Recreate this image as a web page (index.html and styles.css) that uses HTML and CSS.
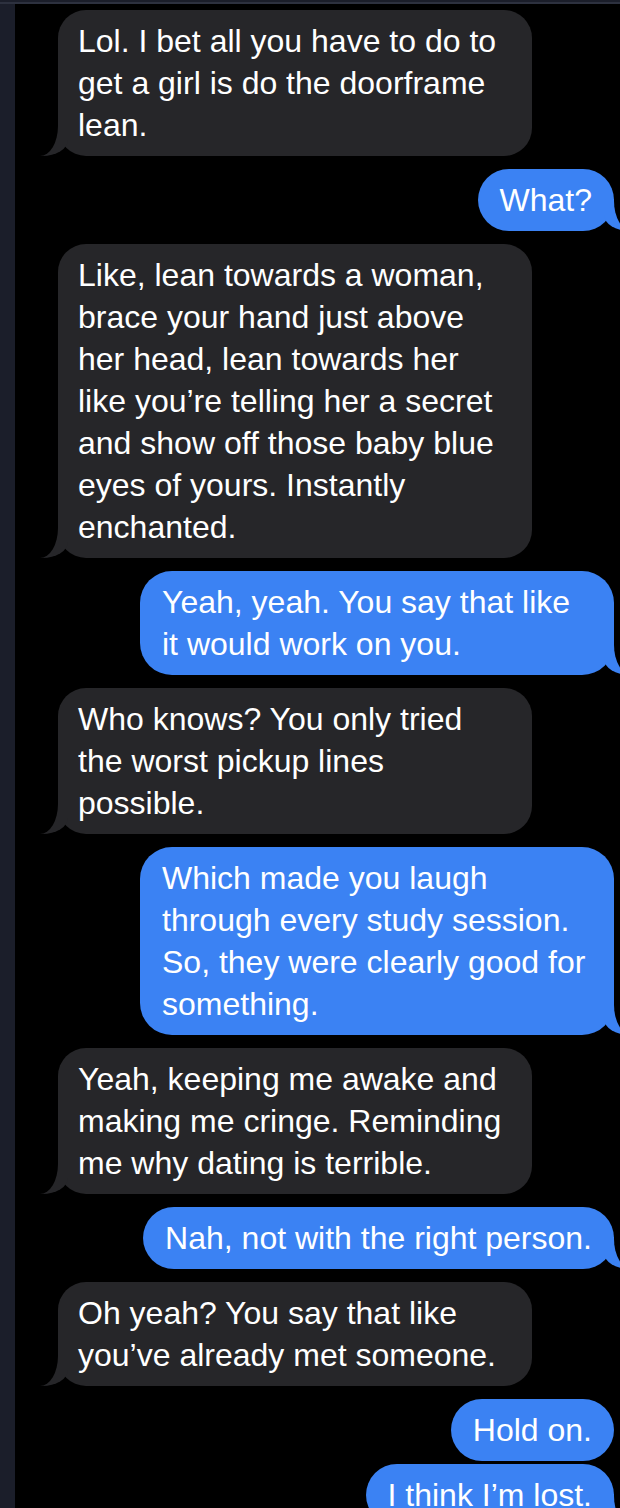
FILE: index.html
```html
<!DOCTYPE html>
<html lang="en">

<head>
  <meta charset="UTF-8" />
  <meta name="viewport" content="width=device-width, initial-scale=1.0" />
  <title>Messages</title>
  <link rel="stylesheet" href="styles.css">
</head>

<body>
  <div class="topbar"></div>
  <div class="layout">
    <aside class="sidebar"></aside>

    <main class="chat">
      <div class="msg them">Lol. I bet all you have to do to get a girl is do the doorframe lean.</div>
      <div class="msg me">What?</div>
      <div class="msg them">Like, lean towards a woman, brace your hand just above her head, lean towards her like you’re telling her a secret and show off those baby blue eyes of yours. Instantly enchanted.</div>
      <div class="msg me">Yeah, yeah. You say that like it would work on you.</div>
      <div class="msg them">Who knows? You only tried the worst pickup lines possible.</div>
      <div class="msg me">Which made you laugh through every study session. So, they were clearly good for something.</div>
      <div class="msg them">Yeah, keeping me awake and making me cringe. Reminding me why dating is terrible.</div>
      <div class="msg me">Nah, not with the right person.</div>
      <div class="msg them">Oh yeah? You say that like you’ve already met someone.</div>
      <div class="msg me no-tail">Hold on.</div>
      <div class="msg me stacked">I think I’m lost.</div>
    </main>
  </div>
</body>

</html>
```

FILE: styles.css
```css
html,
body {
  margin: 0;
  padding: 0;
  height: 100%;
  overflow: hidden;
}

body {
  background-color: #000;
  font-family: 'Liberation Sans', Arial, Helvetica, sans-serif;
  color: #fff;
}

.topbar {
  height: 2px;
  background: #1b1e2a;
  border-bottom: 2px solid #2d313f;
}

.layout {
  display: flex;
  height: 100%;
}

.sidebar {
  flex: 0 0 15px;
  background: #1b1e2a;
}

.chat {
  flex: 1;
  display: flex;
  flex-direction: column;
  gap: 13px;
  padding: 6px 6px 0 43px;
}

.msg {
  position: relative;
  max-width: 474px;
  box-sizing: border-box;
  padding: 10px 22px;
  border-radius: 28px;
  font-size: 32px;
  line-height: 42px;
}

/* received */
.them {
  align-self: flex-start;
  width: 474px;
  padding: 10px 24px 10px 20px;
  background: #262629;
}

.them::before,
.them::after,
.me::before,
.me::after {
  content: "";
  position: absolute;
  bottom: 0;
  height: 32px;
}

.them::before {
  left: -18px;
  width: 28px;
  background: #262629;
  border-bottom-right-radius: 26px 16px;
}

.them::after {
  left: -40px;
  width: 40px;
  background: #000;
  border-bottom-right-radius: 18px 30px;
}

/* sent */
.me {
  align-self: flex-end;
  background: #3b82f3;
  border-radius: 32px;
}

.me::before {
  right: -18px;
  width: 28px;
  background: #3b82f3;
  border-bottom-left-radius: 26px 16px;
}

.me::after {
  right: -40px;
  width: 40px;
  background: #000;
  border-bottom-left-radius: 18px 30px;
}

.no-tail::before,
.no-tail::after {
  display: none;
}

.stacked {
  margin-top: -10px;
}
```
